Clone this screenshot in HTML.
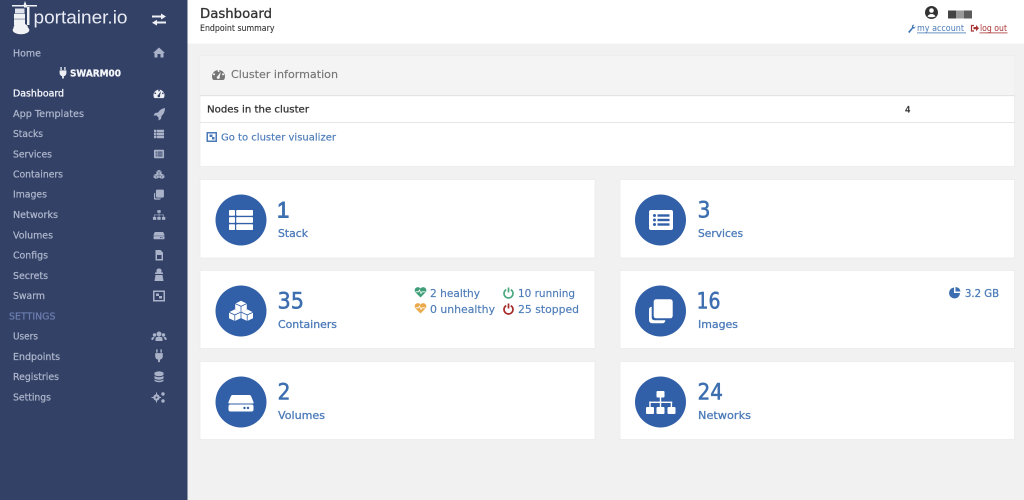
<!DOCTYPE html>
<html lang="en">
<head>
<meta charset="utf-8">
<title>Portainer Dashboard</title>
<style>
html,body{margin:0;padding:0;width:1024px;height:500px;overflow:hidden;background:#f1f1f1}
svg{display:block;filter:blur(.35px)}
text{font-family:"DejaVu Sans",Verdana,sans-serif}
.nav text{font-size:9.7px;fill:#aeb6cb;stroke:#aeb6cb;stroke-width:.22px}
.nav .act{fill:#f2f4f8;stroke:#f2f4f8;stroke-width:.3px}
.nav .hd{fill:#6c7fb0;stroke:#6c7fb0}
.ic{fill:#a9b2c8;--b:#334167}
.big{fill:#fff;--b:#3260a8}
.num{font-size:22px;fill:#3d6fb0;stroke:#3d6fb0;stroke-width:.55px}
.lbl{font-size:10.6px;fill:#4a7ab8;stroke:#4a7ab8;stroke-width:.28px}
.st{font-size:10.5px;fill:#4d7cb9;stroke:#4d7cb9;stroke-width:.15px}
</style>
</head>
<body>
<svg width="1024" height="500" viewBox="0 0 1024 500" xmlns="http://www.w3.org/2000/svg">
<defs>
<g id="list"><rect x="-12" y="-10" width="6" height="5.700" rx=".8"/><rect x="-4.800" y="-10" width="16.800" height="5.700" rx=".8"/><rect x="-12" y="-2.850" width="6" height="5.700" rx=".8"/><rect x="-4.800" y="-2.850" width="16.800" height="5.700" rx=".8"/><rect x="-12" y="4.300" width="6" height="5.700" rx=".8"/><rect x="-4.800" y="4.300" width="16.800" height="5.700" rx=".8"/></g>
<g id="svc"><rect x="-12" y="-10" width="24" height="20" rx="2"/><g style="fill:var(--b)"><circle cx="-6.500" cy="-4.500" r="1.500"/><circle cx="-6.500" cy="0" r="1.500"/><circle cx="-6.500" cy="4.500" r="1.500"/><rect x="-3.500" y="-5.700" width="12" height="2.400"/><rect x="-3.500" y="-1.200" width="12" height="2.400"/><rect x="-3.500" y="3.300" width="12" height="2.400"/></g></g>
<g id="cube"><path d="M0-5.800 5.800-3V3L0 5.800-5.800 3V-3Z"/><path d="M-5.800-3 0-.3 5.800-3M0-.3V5.800" fill="none" style="stroke:var(--b)" stroke-width=".8"/></g>
<g id="cubes"><use href="#cube" y="-4.400"/><use href="#cube" x="-6.200" y="4.200"/><use href="#cube" x="6.200" y="4.200"/></g>
<g id="clone"><rect x="-7.300" y="-11.700" width="19" height="19" rx="2.500"/><path d="M-12-1.500A3 3 0 0 1-9.300-4.300V6.500Q-9.300 9.200-6.500 9.200H4.300A3 3 0 0 1 1.500 12.300H-9A3 3 0 0 1-12 9.300Z"/></g>
<g id="hdd"><path d="M-8.500-8H8.500Q9.500-8 10-7L12.500-1V.5H-12.500V-1L-10-7Q-9.500-8-8.500-8Z"/><rect x="-12.500" y="1.500" width="25" height="7" rx="2"/><circle cx="3.500" cy="5" r="1.200" style="fill:var(--b)"/><circle cx="7" cy="5" r="1.200" style="fill:var(--b)"/></g>
<g id="net"><rect x="-4" y="-11.500" width="8" height="6.500" rx="1"/><rect x="-14.500" y="4.500" width="8" height="7" rx="1"/><rect x="-4" y="4.500" width="8" height="7" rx="1"/><rect x="7" y="4.500" width="8" height="7" rx="1"/><rect x="-.7" y="-5" width="1.400" height="10"/><rect x="-11.200" y="-.9" width="22.900" height="1.400"/><rect x="-11.200" y="-.9" width="1.400" height="6"/><rect x="10.200" y="-.9" width="1.400" height="6"/></g>
<g id="gauge"><path fill-rule="evenodd" d="M-6 4.500A6.500 6.500 0 1 1 6 4.500Q5.500 5.500 4.500 5.500H-4.500Q-5.500 5.500-6 4.500ZM-4.500-1.200a1 1 0 1 0 .1 0ZM4.500-1.200a1 1 0 1 0 .1 0ZM0-4.500a1 1 0 1 0 .1 0ZM2.300-2.800-.8 1.600A1.500 1.500 0 1 0 1.200 2.500Z"/></g>
<g id="plug"><path d="M-4-2.500H4V.5A4 4 0 0 1 1 4.400V7H-1V4.400A4 4 0 0 1-4 .5ZM-3-6.500H-1.500V-3H-3ZM1.500-6.500H3V-3H1.500Z"/></g>
<g id="swarm"><path fill-rule="evenodd" d="M-6-5.500H6V5.500H-6ZM-4.500-4V4H4.500V-4Z"/><rect x="-3" y="-2.500" width="3" height="2.500"/><rect x="0" y="0" width="3" height="2.500"/></g>
<g id="heart"><path d="M0 5.500-5.200.3A3.200 3.200 0 0 1-.5-4L0-3.400.5-4A3.200 3.200 0 0 1 5.200.3Z"/><path d="M-5-.2H-2L-1-2 .5 1.500 1.500-.2H5" fill="none" stroke="#fff" stroke-width=".8"/></g>
<g id="power"><path d="M-2.300-3.400A4.500 4.500 0 1 0 2.300-3.400" fill="none" stroke-width="1.700"/><path d="M0-5.500V-.5" fill="none" stroke-width="1.700"/></g>
</defs>

<rect width="1024" height="500" fill="#f1f1f1"/>
<!-- Header -->
<rect x="187" width="837" height="43.500" fill="#fff"/>
<text x="200" y="18" font-size="13.500" fill="#333" stroke="#333" stroke-width=".3" textLength="72" lengthAdjust="spacingAndGlyphs">Dashboard</text>
<text x="200" y="31" font-size="8.500" fill="#333" stroke="#333" stroke-width=".1" textLength="74.500" lengthAdjust="spacingAndGlyphs">Endpoint summary</text>
<circle cx="931.500" cy="12.500" r="6.500" fill="#333"/>
<circle cx="931.500" cy="10.500" r="2.300" fill="#fff"/>
<path d="M927.500 16.500A4.500 4.500 0 0 1 935.500 16.500Q931.500 18 927.500 16.500Z" fill="#fff"/>
<rect x="948" y="10.500" width="8" height="8" fill="#444"/><rect x="956" y="10.500" width="8" height="8" fill="#999"/><rect x="964" y="10.500" width="8" height="8" fill="#5c5c5c"/>
<path d="M908 32 912 27.500Q911 25 914.500 24.500L913 26.500 914.500 27.500 915.500 26Q915.500 29 913 28.500L909.500 33Z" fill="#3f74b5"/>
<text x="917" y="31" font-size="8.500" fill="#4a7ab8" textLength="47" lengthAdjust="spacingAndGlyphs">my account</text>
<rect x="917" y="32.500" width="49" height=".8" fill="#4a7ab8"/>
<path d="M974 25.500H971.500V31H974" fill="none" stroke="#a33" stroke-width="1.200"/><path d="M973.500 27H976V25L979 28.200 976 31.200V29.200H973.500Z" fill="#a33"/>
<text x="980" y="31" font-size="8.500" fill="#a33" textLength="27" lengthAdjust="spacingAndGlyphs">log out</text>
<rect x="979.500" y="32.500" width="28" height=".8" fill="#a33"/>

<!-- Sidebar -->
<rect width="187.500" height="500" fill="#334167"/>
<!-- Logo -->
<g fill="#f0f2f6">
<path d="M25 1 26.500 5H37V6.500H27V7.500H24V6.500H12V5H23.500Z"/>
<path d="M27 7H29.500V25H27Z"/>
<rect x="15" y="8.500" width="9.500" height="4.800" fill="#dfe3ec"/>
<rect x="14" y="13.800" width="11" height="5"/>
<rect x="14" y="19.300" width="11" height="6"/>
<ellipse cx="21" cy="30" rx="8.300" ry="4.300"/><circle cx="18" cy="28" r="4.500"/><circle cx="24" cy="28" r="4"/>
</g>
<text x="33.500" y="23.500" font-size="18.500" fill="#e9ecf3" textLength="94" lengthAdjust="spacingAndGlyphs" style="font-family:'Liberation Sans',sans-serif">portainer.io</text>
<g fill="#eef0f5"><path d="M152 15.500H161V13.500L166 16.500 161 19.500V17.500H152Z"/><path d="M166 21.500H157V19.800L152 22.700 157 25.600V23.500H166Z"/></g>

<g class="nav">
<text x="13" y="56.500" textLength="28" lengthAdjust="spacingAndGlyphs">Home</text>
<text x="70" y="76.500" class="act" font-weight="bold" textLength="51" lengthAdjust="spacingAndGlyphs" style="font-size:9.500px">SWARM00</text>
<text x="13" y="96.500" class="act" textLength="51" lengthAdjust="spacingAndGlyphs">Dashboard</text>
<text x="13" y="117" textLength="71" lengthAdjust="spacingAndGlyphs">App Templates</text>
<text x="13" y="137" textLength="30" lengthAdjust="spacingAndGlyphs">Stacks</text>
<text x="13" y="157.500" textLength="39" lengthAdjust="spacingAndGlyphs">Services</text>
<text x="13" y="177.500" textLength="50" lengthAdjust="spacingAndGlyphs">Containers</text>
<text x="13" y="197.500" textLength="34" lengthAdjust="spacingAndGlyphs">Images</text>
<text x="13" y="218" textLength="45" lengthAdjust="spacingAndGlyphs">Networks</text>
<text x="13" y="238.500" textLength="40" lengthAdjust="spacingAndGlyphs">Volumes</text>
<text x="13" y="258.500" textLength="35" lengthAdjust="spacingAndGlyphs">Configs</text>
<text x="13" y="279" textLength="35" lengthAdjust="spacingAndGlyphs">Secrets</text>
<text x="13" y="299" textLength="32" lengthAdjust="spacingAndGlyphs">Swarm</text>
<text x="9" y="319.500" class="hd" textLength="46.500" lengthAdjust="spacingAndGlyphs">SETTINGS</text>
<text x="13" y="339.500" textLength="25" lengthAdjust="spacingAndGlyphs">Users</text>
<text x="13" y="360" textLength="47" lengthAdjust="spacingAndGlyphs">Endpoints</text>
<text x="13" y="380" textLength="46" lengthAdjust="spacingAndGlyphs">Registries</text>
<text x="13" y="400.500" textLength="38" lengthAdjust="spacingAndGlyphs">Settings</text>
</g>

<g class="ic">
<path d="M159 47.500 165 53H163.500V57.500H160.500V54H157.500V57.500H154.500V53H153Z"/>
<use href="#plug" transform="translate(63 72.500) scale(.85)" style="fill:#eef0f5"/>
<use href="#gauge" transform="translate(159 93.500) scale(.85)" style="fill:#eef0f5"/>
<path d="M165 108Q165 113 161.500 116L161 119 158.500 120.500 158.500 117.500 156.500 115.500 153.500 115.500 155 113 158 112.500Q160.500 108.500 165 108Z"/>
<use href="#list" transform="translate(159 134) scale(.42)"/>
<use href="#svc" transform="translate(159 154) scale(.42)"/>
<use href="#cubes" transform="translate(159 174.500) scale(.45)"/>
<use href="#clone" transform="translate(159 194.500) scale(.42)"/>
<use href="#net" transform="translate(159 215) scale(.42)"/>
<use href="#hdd" transform="translate(159 235.500) scale(.44)"/>
<path fill-rule="evenodd" d="M155.500 250H160.500L163 252.500V260.500H155.500ZM157 255H161.500V259H157Z"/>
<path d="M156.500 272.500V270.500Q156.500 268.500 159 268.500 161.500 268.500 161.500 270.500V272.500H163V274H155V272.500ZM155.500 275H162.500L163.500 281H154.500Z"/>
<use href="#swarm" transform="translate(159 296)"/>
<circle cx="159" cy="334" r="2.500"/><circle cx="154.500" cy="335" r="1.700"/><circle cx="163.500" cy="335" r="1.700"/><path d="M155.500 341V338.500Q155.500 336.800 159 336.800 162.500 336.800 162.500 338.500V341ZM153 340H151.500V338Q151.500 337 154.500 337ZM165 340H166.500V338Q166.500 337 163.500 337Z"/>
<use href="#plug" transform="translate(159 355.500) scale(.95)"/>
<path d="M154.500 372.500Q159 370 163.500 372.500V375Q159 377.500 154.500 375ZM154.500 376Q159 378.500 163.500 376V378.500Q159 381 154.500 378.500ZM154.500 379.500Q159 382 163.500 379.500V381Q159 383.500 154.500 381Z"/>
<circle cx="156.500" cy="397.500" r="3.200"/><circle cx="156.500" cy="397.500" r="1" fill="#334167"/>
<circle cx="163" cy="394" r="1.700"/><circle cx="163" cy="401" r="1.700"/>
<path d="M156 392.500H157V394.500H156ZM156 400.500H157V402.500H156ZM151.500 397H153.500V398H151.500ZM159.500 397H161V398H159.500Z"/>
</g>

<!-- Cluster widget -->
<rect x="200" y="55.500" width="814.500" height="111" fill="#fff" stroke="#ebebeb" stroke-width=".8"/>
<rect x="200" y="56" width="814.500" height="39" fill="#f4f4f4"/>
<rect x="200" y="95" width="814.500" height="1.200" fill="#e4e4e4"/>
<rect x="200" y="122" width="814.500" height="1" fill="#e6e6e6"/>
<use href="#gauge" transform="translate(218.500 74.500)" style="fill:#767676"/>
<text x="231" y="78" font-size="10.800" fill="#767676" stroke="#767676" stroke-width=".15" textLength="107" lengthAdjust="spacingAndGlyphs">Cluster information</text>
<text x="207" y="112.500" font-size="10" fill="#333" stroke="#333" stroke-width=".28" textLength="102" lengthAdjust="spacingAndGlyphs">Nodes in the cluster</text>
<text x="905" y="112.500" font-size="9" fill="#333" stroke="#333" stroke-width=".3" textLength="5.500" lengthAdjust="spacingAndGlyphs">4</text>
<path fill-rule="evenodd" d="M206.500 132H217V142H206.500ZM208 133.500V140.500H215.500V133.500Z" fill="#4a7ab8"/>
<rect x="209.500" y="134.500" width="3" height="2.500" fill="#4a7ab8"/><rect x="212" y="137" width="2.500" height="2.500" fill="#4a7ab8"/>
<text x="221" y="140.500" font-size="10" fill="#4a7ab8" stroke="#4a7ab8" stroke-width=".15" textLength="115" lengthAdjust="spacingAndGlyphs">Go to cluster visualizer</text>

<!-- Cards -->
<g fill="#fff" stroke="#ececec" stroke-width=".8">
<rect x="200" y="179.500" width="395" height="78.500"/>
<rect x="200" y="270.500" width="395" height="78"/>
<rect x="200" y="361.500" width="395" height="78"/>
<rect x="620" y="179.500" width="394.500" height="78.500"/>
<rect x="620" y="270.500" width="394.500" height="78"/>
<rect x="620" y="361.500" width="394.500" height="78"/>
</g>
<g fill="#3260a8">
<circle cx="241" cy="220" r="25.500"/><circle cx="241" cy="311" r="25.500"/><circle cx="241" cy="402" r="25.500"/>
<circle cx="660.500" cy="220" r="25.500"/><circle cx="660.500" cy="311" r="25.500"/><circle cx="660.500" cy="402" r="25.500"/>
</g>
<g class="big">
<use href="#list" transform="translate(241 220)"/>
<use href="#svc" transform="translate(661 220)"/>
<use href="#cubes" transform="translate(241 311)"/>
<use href="#clone" transform="translate(661 311)"/>
<use href="#hdd" transform="translate(241 403)"/>
<use href="#net" transform="translate(660.500 402.500)"/>
</g>

<text class="num" x="277" y="217.500" style="font-family:'Liberation Sans',sans-serif;stroke-width:.9px">1</text>
<text class="lbl" x="278" y="237" textLength="30" lengthAdjust="spacingAndGlyphs">Stack</text>
<text class="num" x="277.500" y="308.500" textLength="26.500" lengthAdjust="spacingAndGlyphs">35</text>
<text class="lbl" x="278" y="328" textLength="59" lengthAdjust="spacingAndGlyphs">Containers</text>
<text class="num" x="277.500" y="399.500" textLength="13" lengthAdjust="spacingAndGlyphs">2</text>
<text class="lbl" x="278" y="419" textLength="47" lengthAdjust="spacingAndGlyphs">Volumes</text>
<text class="num" x="697.500" y="217.500" textLength="13" lengthAdjust="spacingAndGlyphs">3</text>
<text class="lbl" x="698" y="237" textLength="45" lengthAdjust="spacingAndGlyphs">Services</text>
<text class="num" x="696.500" y="308.500" textLength="24" lengthAdjust="spacingAndGlyphs">16</text>
<text class="lbl" x="698" y="328" textLength="40" lengthAdjust="spacingAndGlyphs">Images</text>
<text class="num" x="697.500" y="399.500" textLength="25.500" lengthAdjust="spacingAndGlyphs">24</text>
<text class="lbl" x="698" y="419" textLength="53" lengthAdjust="spacingAndGlyphs">Networks</text>

<!-- Status -->
<use href="#heart" transform="translate(420.500 292)" fill="#3f9e78"/>
<use href="#heart" transform="translate(420.500 308)" fill="#eaa94b"/>
<use href="#power" transform="translate(508.500 293)" stroke="#4aa97f"/>
<use href="#power" transform="translate(508.500 309)" stroke="#a52a2a"/>
<text class="st" x="430" y="297" textLength="50" lengthAdjust="spacingAndGlyphs">2 healthy</text>
<text class="st" x="430" y="313" textLength="65" lengthAdjust="spacingAndGlyphs">0 unhealthy</text>
<text class="st" x="518" y="297" textLength="57" lengthAdjust="spacingAndGlyphs">10 running</text>
<text class="st" x="518" y="313" textLength="61" lengthAdjust="spacingAndGlyphs">25 stopped</text>
<path d="M954 287.500V293H960A5.500 5.500 0 1 1 954 287.500Z" fill="#3d6fb0"/><path d="M955.500 287A5 5 0 0 1 960.500 291.500H955.500Z" fill="#3d6fb0"/>
<text class="st" x="965" y="297" textLength="34" lengthAdjust="spacingAndGlyphs" style="stroke-width:.3px">3.2 GB</text>
</svg>
</body>
</html>
